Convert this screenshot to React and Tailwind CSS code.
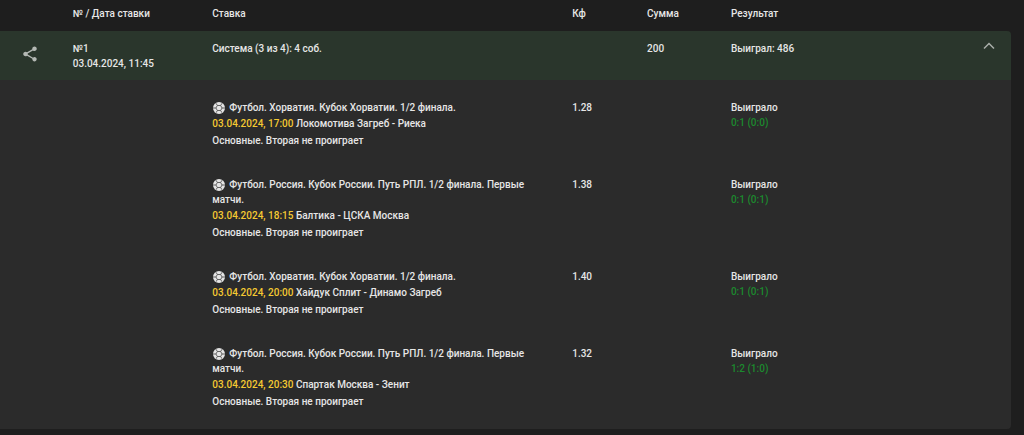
import { useState } from "react";
import { MdShare } from "react-icons/md";

const bet = {
    id: "№1",
    date: "03.04.2024, 11:45",
    title: "Система (3 из 4): 4 соб.",
    amount: "200",
    result: "Выиграл: 486",
};

const events = [
    {
        league: "Футбол. Хорватия. Кубок Хорватии. 1/2 финала.",
        date: "03.04.2024, 17:00",
        teams: "Локомотива Загреб - Риека",
        market: "Основные. Вторая не проиграет",
        odds: "1.28",
        status: "Выиграло",
        score: "0:1 (0:0)",
    },
    {
        league: "Футбол. Россия. Кубок России. Путь РПЛ. 1/2 финала. Первые матчи.",
        date: "03.04.2024, 18:15",
        teams: "Балтика - ЦСКА Москва",
        market: "Основные. Вторая не проиграет",
        odds: "1.38",
        status: "Выиграло",
        score: "0:1 (0:1)",
    },
    {
        league: "Футбол. Хорватия. Кубок Хорватии. 1/2 финала.",
        date: "03.04.2024, 20:00",
        teams: "Хайдук Сплит - Динамо Загреб",
        market: "Основные. Вторая не проиграет",
        odds: "1.40",
        status: "Выиграло",
        score: "0:1 (0:1)",
    },
    {
        league: "Футбол. Россия. Кубок России. Путь РПЛ. 1/2 финала. Первые матчи.",
        date: "03.04.2024, 20:30",
        teams: "Спартак Москва - Зенит",
        market: "Основные. Вторая не проиграет",
        odds: "1.32",
        status: "Выиграло",
        score: "1:2 (1:0)",
    },
];

function BallIcon() {
    return (
        <svg viewBox="0 0 24 24" className="inline-block size-3 ml-px mr-1 align-[-3px]" aria-hidden="true">
            <circle cx="12" cy="12" r="12" fill="#e4e4e4" />
            <g fill="none" stroke="#4a4a4a" strokeWidth="1.7">
                <path d="M8.8 7h6.4l3 5-3 5H8.8l-3-5z" />
                <path d="M8.8 7 6 2.5M15.2 7 18 2.5M18.2 12H24M15.2 17l2.8 4.5M8.8 17 6 21.5M5.8 12H0" />
            </g>
        </svg>
    );
}

function EventRow({ event, last }) {
    return (
        <tr className="bg-[#2b2b2b] align-top">
            <td colSpan={2}></td>
            <td className={`pt-5 pr-8 ${last ? "pb-[19px]" : "pb-2"}`}>
                <p>
                    <BallIcon />
                    {event.league}
                </p>
                <p className="leading-[17px]">
                    <span className="text-[#f5c932]">{event.date}</span> {event.teams}
                </p>
                <p className="leading-[17px]">{event.market}</p>
            </td>
            <td className="pt-5">{event.odds}</td>
            <td></td>
            <td className="pt-5">
                {event.status}
                <p className="text-[#1c8a2e]">{event.score}</p>
            </td>
            <td className={last ? "rounded-br" : ""}></td>
        </tr>
    );
}

export default function App() {
    const [open, setOpen] = useState(true);

    return (
        <div className="min-h-screen bg-[#1e1e1e] pr-[13px] font-['Roboto','Noto_Sans',sans-serif] text-[10px] leading-[15px] font-medium text-[#e6e6e6]">
            <table className="w-full table-fixed border-separate border-spacing-0 text-left">
                <colgroup>
                    <col className="w-[7.2%]" />
                    <col className="w-[13.8%]" />
                    <col className="w-[35.6%]" />
                    <col className="w-[7.4%]" />
                    <col className="w-[8.3%]" />
                    <col className="w-[24%]" />
                    <col />
                </colgroup>
                <thead>
                    <tr className="[&>th]:pt-[6px] [&>th]:pb-[10px] [&>th]:font-medium">
                        <td></td>
                        <th scope="col">№ / Дата ставки</th>
                        <th scope="col">Ставка</th>
                        <th scope="col">Кф</th>
                        <th scope="col">Сумма</th>
                        <th scope="col">Результат</th>
                        <td></td>
                    </tr>
                </thead>
                <tbody>
                    <tr className="bg-[#2a362c] align-top [&>td+td]:pt-[10px] [&>td+td]:pb-[9px]">
                        <td className="pb-1 pl-[21px] align-middle">
                            <button type="button" aria-label="Поделиться" className="block cursor-pointer text-[#b4b8b4]">
                                <MdShare className="size-[18px]" />
                            </button>
                        </td>
                        <td>
                            {bet.id}
                            <br />
                            {bet.date}
                        </td>
                        <td>{bet.title}</td>
                        <td></td>
                        <td>{bet.amount}</td>
                        <td>{bet.result}</td>
                        <td className="rounded-tr pr-4">
                            <button
                                type="button"
                                aria-label="Показать события"
                                aria-expanded={open}
                                onClick={() => setOpen(!open)}
                                className="ml-auto block cursor-pointer text-[#a9aea9]"
                            >
                                <svg viewBox="0 0 12 12" className={`size-3 ${open ? "" : "rotate-180"}`} fill="none" stroke="currentColor" strokeWidth="1.5">
                                    <path d="M1 7.5 6 2.5l5 5" />
                                </svg>
                            </button>
                        </td>
                    </tr>
                    {open && events.map((event, i) => (
                        <EventRow key={event.date} event={event} last={i === events.length - 1} />
                    ))}
                </tbody>
            </table>
        </div>
    );
}
